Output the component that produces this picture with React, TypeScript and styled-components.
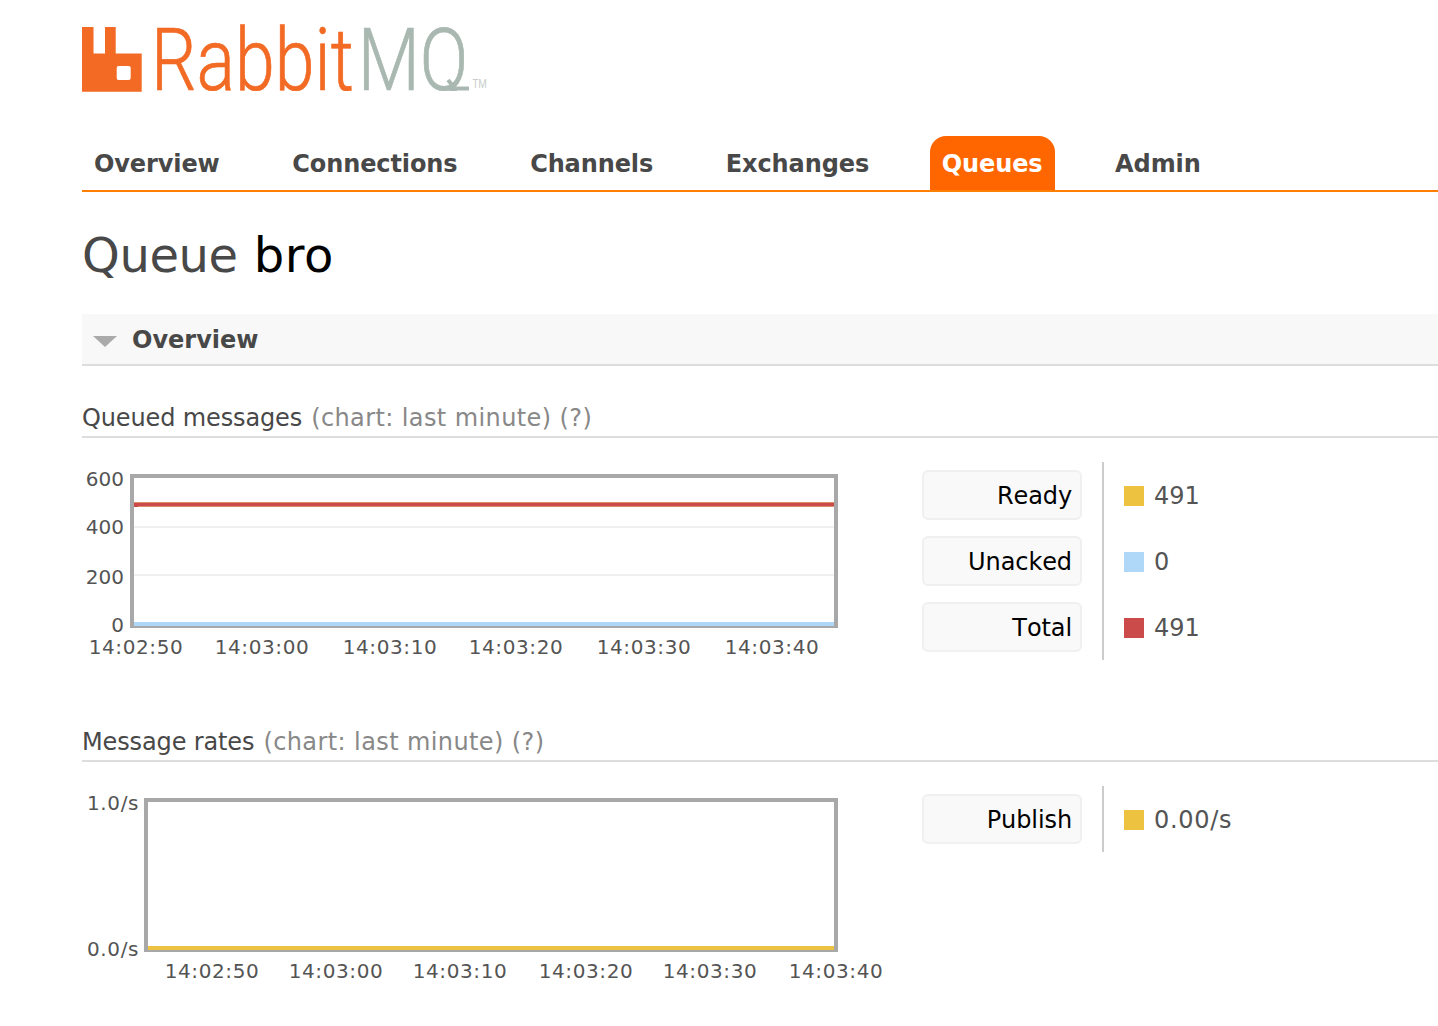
import React from 'react';
import styled, { createGlobalStyle } from 'styled-components';

const GlobalStyle = createGlobalStyle`
  html, body {
    margin: 0;
    padding: 0;
    background: #fff;
  }
  body {
    font-family: "DejaVu Sans", Verdana, sans-serif;
    color: #484848;
  }
`;

const Page = styled.div`
  width: 1438px;
  height: 1026px;
  overflow: hidden;
  box-sizing: border-box;
  padding-left: 82px;
`;

const Header = styled.header`
  height: 136px;
`;

const LogoSvg = styled.svg`
  display: block;
  width: 420px;
  height: 120px;
`;

const Nav = styled.nav`
  display: flex;
  gap: 48.6px;
  height: 54px;
  border-bottom: 2px solid #ff8000;
`;

const NavItem = styled.a<{ $active?: boolean }>`
  display: flex;
  align-items: center;
  padding: 2px 12px 0;
  border-radius: 16px 16px 0 0;
  font-size: 24px;
  font-weight: bold;
  letter-spacing: -0.1px;
  color: ${(p) => (p.$active ? '#fff' : '#484848')};
  background: ${(p) => (p.$active ? '#ff6600' : 'transparent')};
`;

const Title = styled.h1`
  display: flex;
  align-items: center;
  gap: 16px;
  box-sizing: border-box;
  height: 122px;
  margin: 0;
  padding-top: 4px;
  font-size: 48px;
  font-weight: normal;
  letter-spacing: -0.4px;
  color: #484848;

  b {
    font-weight: normal;
    letter-spacing: 0.6px;
    color: #000;
  }
`;

const SectionHead = styled.div`
  display: flex;
  align-items: center;
  gap: 15px;
  height: 48px;
  padding: 2px 0 0 11px;
  background: #f8f8f8;
  border-bottom: 2px solid #ddd;
  font-size: 24px;
  font-weight: bold;
`;

const Arrow = styled.span`
  width: 0;
  height: 0;
  margin-top: 3px;
  border-left: 12px solid transparent;
  border-right: 12px solid transparent;
  border-top: 11px solid #aaa;
`;

const SubHead = styled.h3<{ $top: number }>`
  display: flex;
  align-items: center;
  gap: 9px;
  height: 36px;
  margin: ${(p) => p.$top}px 0 24px;
  border-bottom: 2px solid #ddd;
  font-size: 24px;
  font-weight: normal;
  letter-spacing: -0.13px;
  color: #484848;

  span {
    letter-spacing: 0.4px;
    color: #888;
  }
`;

const ChartRow = styled.div`
  display: flex;
  align-items: flex-start;
`;

const ChartSvg = styled.svg`
  display: block;
  flex: none;
  width: 840px;
  height: 198px;
  overflow: visible;

  text {
    font-family: "DejaVu Sans", Verdana, sans-serif;
    font-size: 20px;
    fill: #545454;
  }
`;

const TimeLabel = styled.text`
  letter-spacing: 0.6px;
`;

const RateLabel = styled.text`
  letter-spacing: 0.6px;
`;

const Legend = styled.div`
  display: flex;
`;

const LegendLabels = styled.div`
  display: flex;
  flex-direction: column;
  width: 160px;
`;

const LegendLabel = styled.div`
  box-sizing: border-box;
  height: 50px;
  margin: 8px 0;
  padding-right: 8px;
  border: 2px solid #f0f0f0;
  border-radius: 6px;
  background: #f9f9f9;
  font-size: 24px;
  font-kerning: none;
  line-height: 49px;
  letter-spacing: -0.1px;
  text-align: right;
  color: #000;
`;

const LegendValues = styled.div`
  display: flex;
  flex-direction: column;
  margin-left: 20px;
  padding: 0 20px;
  border-left: 2px solid #ccc;
`;

const LegendValue = styled.div<{ $rate?: boolean }>`
  display: flex;
  align-items: center;
  gap: 10px;
  box-sizing: border-box;
  height: 66px;
  padding-top: 2px;
  font-size: 24px;
  letter-spacing: ${(p) => (p.$rate ? '0.7px' : '0')};
  color: #545454;
`;

const Swatch = styled.span<{ $color: string }>`
  width: 20px;
  height: 20px;
  background: ${(p) => p.$color};
`;

const YELLOW = '#edc240';
const BLUE = '#afd8f8';
const RED = '#cb4b4b';
const FRAME = '#a8a8a8';

const Logo = () => (
  <LogoSvg viewBox="0 0 420 120">
    <defs>
      <clipPath id="logo-clip">
        <rect x="0" y="0" width="500" height="91" />
      </clipPath>
    </defs>
    <path
      fill="#f26a24"
      fillRule="evenodd"
      d="M0 27H11.5V53.5H23V27H33.7V53.5H59.7V91.7H0ZM36.5 66Q34.7 66 34.7 68V78Q34.7 80 36.5 80H46.7Q48.7 80 48.7 78V68Q48.7 66 46.7 66Z"
    />
    <g clipPath="url(#logo-clip)">
      <text
        transform="translate(69 90) scale(0.815 1)"
        fontFamily="Roboto, sans-serif"
        fontWeight="300"
        fontSize="88"
      >
        <tspan fill="#f26a24" stroke="#f26a24" strokeWidth="0.7">
          Rabbit
        </tspan>
        <tspan dx="5" fill="#a9b8b1" stroke="#a9b8b1" strokeWidth="0.7">
          MQ
        </tspan>
        <tspan dx="5" dy="-2" fontSize="12" fontWeight="400" fill="#c8cfcb">
          TM
        </tspan>
      </text>
    </g>
    {/* Q tail, the wordmark runs it flat along the baseline */}
    <path d="M366 80L373 88.5H387" fill="none" stroke="#a9b8b1" strokeWidth="4" />
  </LogoSvg>
);

const ChartOne = () => {
  const yTicks = [
    { y: 24, label: '600' },
    { y: 72, label: '400' },
    { y: 122, label: '200' },
    { y: 170, label: '0' },
  ];
  const xTicks = [
    { x: 54, label: '14:02:50' },
    { x: 180, label: '14:03:00' },
    { x: 308, label: '14:03:10' },
    { x: 434, label: '14:03:20' },
    { x: 562, label: '14:03:30' },
    { x: 690, label: '14:03:40' },
  ];
  return (
    <ChartSvg viewBox="0 0 840 198">
      <rect x="52" y="64" width="700" height="2" fill="#f0f0f0" />
      <rect x="52" y="112" width="700" height="2" fill="#f0f0f0" />
      <rect x="50" y="14" width="704" height="150" fill="none" stroke={FRAME} strokeWidth="4" />
      <rect x="52" y="40" width="700" height="5" fill="#dc8f6a" />
      <rect x="52" y="41" width="700" height="3" fill={RED} />
      <rect x="52" y="43" width="4" height="2" fill={RED} />
      <rect x="52" y="160" width="700" height="4" fill={BLUE} />
      {yTicks.map((t) => (
        <text key={t.label} x="42" y={t.y} textAnchor="end">
          {t.label}
        </text>
      ))}
      {xTicks.map((t) => (
        <TimeLabel key={t.label} x={t.x} y="192" textAnchor="middle">
          {t.label}
        </TimeLabel>
      ))}
    </ChartSvg>
  );
};

const ChartTwo = () => {
  const xTicks = [
    { x: 130, label: '14:02:50' },
    { x: 254, label: '14:03:00' },
    { x: 378, label: '14:03:10' },
    { x: 504, label: '14:03:20' },
    { x: 628, label: '14:03:30' },
    { x: 754, label: '14:03:40' },
  ];
  return (
    <ChartSvg viewBox="0 0 840 198">
      <rect x="64" y="14" width="690" height="150" fill="none" stroke={FRAME} strokeWidth="4" />
      <rect x="66" y="160" width="686" height="4" fill={YELLOW} />
      <RateLabel x="57" y="24" textAnchor="end">
        1.0/s
      </RateLabel>
      <RateLabel x="57" y="170" textAnchor="end">
        0.0/s
      </RateLabel>
      {xTicks.map((t) => (
        <TimeLabel key={t.label} x={t.x} y="192" textAnchor="middle">
          {t.label}
        </TimeLabel>
      ))}
    </ChartSvg>
  );
};

export default function App() {
  return (
    <Page>
      <GlobalStyle />
      <Header>
        <Logo />
      </Header>
      <Nav>
        <NavItem>Overview</NavItem>
        <NavItem>Connections</NavItem>
        <NavItem>Channels</NavItem>
        <NavItem>Exchanges</NavItem>
        <NavItem $active>Queues</NavItem>
        <NavItem>Admin</NavItem>
      </Nav>
      <Title>
        Queue <b>bro</b>
      </Title>
      <SectionHead>
        <Arrow />
        Overview
      </SectionHead>
      <SubHead $top={34}>
        Queued messages <span>(chart: last minute) (?)</span>
      </SubHead>
      <ChartRow>
        <ChartOne />
        <Legend>
          <LegendLabels>
            <LegendLabel>Ready</LegendLabel>
            <LegendLabel>Unacked</LegendLabel>
            <LegendLabel>Total</LegendLabel>
          </LegendLabels>
          <LegendValues>
            <LegendValue>
              <Swatch $color={YELLOW} />
              491
            </LegendValue>
            <LegendValue>
              <Swatch $color={BLUE} />0
            </LegendValue>
            <LegendValue>
              <Swatch $color={RED} />
              491
            </LegendValue>
          </LegendValues>
        </Legend>
      </ChartRow>
      <SubHead $top={64}>
        Message rates <span>(chart: last minute) (?)</span>
      </SubHead>
      <ChartRow>
        <ChartTwo />
        <Legend>
          <LegendLabels>
            <LegendLabel>Publish</LegendLabel>
          </LegendLabels>
          <LegendValues>
            <LegendValue $rate>
              <Swatch $color={YELLOW} />
              0.00/s
            </LegendValue>
          </LegendValues>
        </Legend>
      </ChartRow>
    </Page>
  );
}
